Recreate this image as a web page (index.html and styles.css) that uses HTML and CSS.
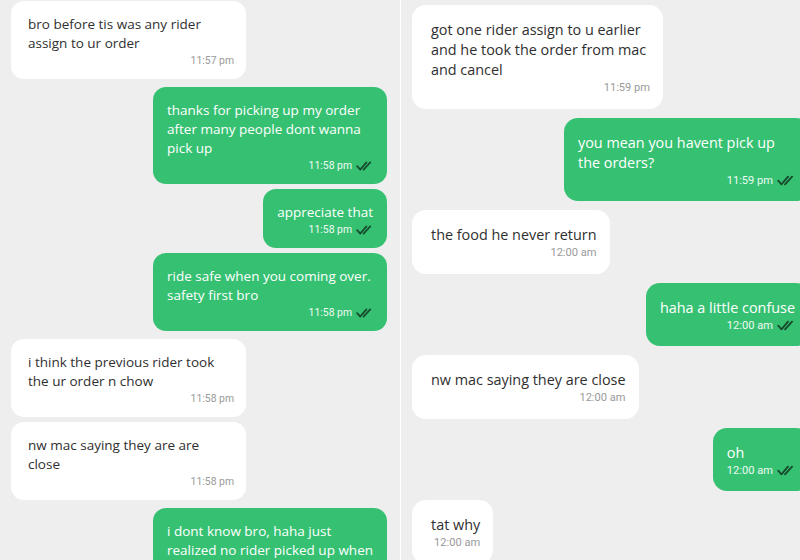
FILE: index.html
```html
<!DOCTYPE html>
<html>
<head>
<meta charset="utf-8">
<link rel="stylesheet" href="styles.css">
</head>
<body>
<div class="page">
  <div class="panel left">
    <div class="msg in wide"><div class="text">bro before tis was any rider<br>assign to ur order</div><div class="meta"><span>11:57 pm</span></div></div>
    <div class="msg out wide new"><div class="text">thanks for picking up my order<br>after many people dont wanna<br>pick up</div><div class="meta"><span>11:58 pm</span><svg class="tick" viewBox="0 0 17 10"><path d="M1.2 5.2 L4.2 8.6 L10.4 1.4 M7.6 8.6 L14.2 1.4"/></svg></div></div>
    <div class="msg out"><div class="text">appreciate that</div><div class="meta"><span>11:58 pm</span><svg class="tick" viewBox="0 0 17 10"><path d="M1.2 5.2 L4.2 8.6 L10.4 1.4 M7.6 8.6 L14.2 1.4"/></svg></div></div>
    <div class="msg out wide"><div class="text">ride safe when you coming over.<br>safety first bro</div><div class="meta"><span>11:58 pm</span><svg class="tick" viewBox="0 0 17 10"><path d="M1.2 5.2 L4.2 8.6 L10.4 1.4 M7.6 8.6 L14.2 1.4"/></svg></div></div>
    <div class="msg in wide new"><div class="text">i think the previous rider took<br>the ur order n chow</div><div class="meta"><span>11:58 pm</span></div></div>
    <div class="msg in wide"><div class="text">nw mac saying they are are<br>close</div><div class="meta"><span>11:58 pm</span></div></div>
    <div class="msg out wide new"><div class="text">i dont know bro, haha just<br>realized no rider picked up when</div></div>
  </div>
  <div class="divider"></div>
  <div class="panel right">
    <div class="msg in wide"><div class="text">got one rider assign to u earlier<br>and he took the order from mac<br>and cancel</div><div class="meta"><span>11:59 pm</span></div></div>
    <div class="msg out wide"><div class="text">you mean you havent pick up<br>the orders?</div><div class="meta"><span>11:59 pm</span><svg class="tick" viewBox="0 0 17 10"><path d="M1.2 5.2 L4.2 8.6 L10.4 1.4 M7.6 8.6 L14.2 1.4"/></svg></div></div>
    <div class="msg in"><div class="text">the food he never return</div><div class="meta"><span>12:00 am</span></div></div>
    <div class="msg out"><div class="text">haha a little confuse</div><div class="meta"><span>12:00 am</span><svg class="tick" viewBox="0 0 17 10"><path d="M1.2 5.2 L4.2 8.6 L10.4 1.4 M7.6 8.6 L14.2 1.4"/></svg></div></div>
    <div class="msg in"><div class="text">nw mac saying they are close</div><div class="meta"><span>12:00 am</span></div></div>
    <div class="msg out"><div class="text">oh</div><div class="meta"><span>12:00 am</span><svg class="tick" viewBox="0 0 17 10"><path d="M1.2 5.2 L4.2 8.6 L10.4 1.4 M7.6 8.6 L14.2 1.4"/></svg></div></div>
    <div class="msg in"><div class="text">tat why</div><div class="meta"><span>12:00 am</span></div></div>
  </div>
</div>
</body>
</html>
```
FILE: styles.css
```css
html, body {
  margin: 0;
  padding: 0;
  overflow: hidden;
  background: #eeeeee;
}

.page {
  display: flex;
  width: 824px;
  height: 560px;
  overflow: hidden;
  font-family: "Open Sans", "Noto Sans", sans-serif;
}

.panel {
  display: flex;
  flex-direction: column;
  background: #eeeeee;
  box-sizing: border-box;
  overflow: hidden;
  flex: none;
}

.left {
  width: 400px;
  padding: 1px 13px 0 11px;
  gap: 5px;
  font-size: 13.5px;
}

.divider {
  width: 1px;
  flex: none;
  background: #ffffff;
}

.right {
  width: 423px;
  padding: 5px 14px 0 11px;
  gap: 9px;
  font-size: 14.4px;
}

.msg {
  box-sizing: border-box;
  border-radius: 13px;
  flex: none;
}

.msg.new {
  margin-top: 3px;
}

.msg.in {
  align-self: flex-start;
  background: #ffffff;
  color: #2f2f2f;
}

.msg.out {
  align-self: flex-end;
  background: #36c172;
  color: #ffffff;
}

.text {
  white-space: nowrap;
}

.meta {
  display: flex;
  justify-content: flex-end;
  align-items: center;
  gap: 4px;
  white-space: nowrap;
  font-family: Roboto, "Open Sans", sans-serif;
}

.msg.in .meta {
  color: #9a9a9a;
}

.msg.out .meta {
  color: #eefaf2;
}

.tick {
  fill: none;
  stroke: #174d2d;
  stroke-width: 1.8;
  stroke-linecap: round;
  stroke-linejoin: round;
}

/* left panel sizing */
.left .msg.in { padding: 14px 12px 11px 17px; }
.left .msg.out { padding: 14px 14px 11px 14px; }
.left .msg.in.wide { width: 235px; }
.left .msg.out.wide { width: 234px; }
.left .text { line-height: 19px; }
.left .meta { font-size: 10.4px; line-height: 15px; }
.left .tick { width: 17px; height: 10px; }

/* right panel sizing */
.right .msg { border-radius: 14px; }
.right .msg.in { padding: 15px 13px 12px 19px; }
.right .msg.out { padding: 15px 15px 12px 14px; }
.right .msg.in.wide { width: 251px; }
.right .msg.out.wide { width: 246px; }
.right .text { line-height: 20px; }
.right .meta { font-size: 11.1px; line-height: 16.5px; gap: 4px; }
.right .tick { width: 18px; height: 11px; }
```
